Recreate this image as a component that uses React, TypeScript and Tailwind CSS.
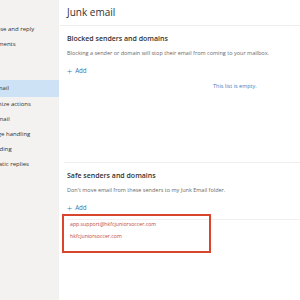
import React from 'react';

const font = { fontFamily: '"Open Sans", "Noto Sans", sans-serif' };

function NavItem({ label, active }: { label: string; active?: boolean }) {
  return (
    <div
      className={`flex items-center overflow-hidden whitespace-nowrap text-[6px] text-[#323130] ${
        active ? 'h-[17px] bg-[#cde3f5]' : 'h-[15px]'
      }`}
    >
      <span className="ml-[-20px]">{label}</span>
    </div>
  );
}

function AddButton() {
  return (
    <div className="flex h-[12px] items-center gap-[3px] text-[6.2px] text-[#3b74a8]">
      <span className="text-[9px] leading-none font-light">+</span>
      <span>Add</span>
    </div>
  );
}

export default function App() {
  return (
    <div className="flex h-[300px] w-[300px] overflow-hidden bg-white" style={font}>
      <aside className="w-[59px] shrink-0 bg-[#f3f2f1] pt-[22px]">
        <NavItem label="Compose and reply" />
        <NavItem label="Attachments" />
        <div className="h-[28px]" />
        <NavItem label="Junk email" active />
        <NavItem label="Customize actions" />
        <NavItem label="Sync email" />
        <NavItem label="Message handling" />
        <NavItem label="Forwarding" />
        <NavItem label="Automatic replies" />
      </aside>

      <main className="flex-1 pl-[1px]">
        <div className="flex h-[26px] items-center border-b border-[#efeeed] pl-[7px] text-[10px] text-[#323130]">
          Junk email
        </div>

        <section className="pl-[7px]">
          <h2 className="mt-[6px] flex h-[14px] items-center text-[7px] font-semibold text-[#323130]">
            Blocked senders and domains
          </h2>
          <p className="mt-[2px] flex h-[10px] items-center whitespace-nowrap text-[5.5px] text-[#6b6967]">
            Blocking a sender or domain will stop their email from coming to your mailbox.
          </p>
          <div className="mt-[7px]">
            <AddButton />
          </div>
          <p className="mt-[4px] ml-[146px] flex h-[10px] items-center text-[5.5px] text-[#3d82c4]">
            This list is empty.
          </p>
        </section>

        <div className="mt-[71px] ml-[4px] border-t border-[#efeeed]" />

        <section className="pl-[7px]">
          <h2 className="mt-[6px] flex h-[14px] items-center text-[7px] font-semibold text-[#323130]">
            Safe senders and domains
          </h2>
          <p className="mt-[2px] flex h-[10px] items-center whitespace-nowrap text-[5.5px] text-[#6b6967]">
            Don't move email from these senders to my Junk Email folder.
          </p>
          <div className="mt-[7px]">
            <AddButton />
          </div>
          <div className="relative mt-[5px] border-t border-[#f1f0ef]">
            <div className="flex h-[10px] items-center pl-[3px] text-[5.2px] text-[#c1463a]">
              app.support@hkfcjuniorsoccer.com
            </div>
            <div className="mt-[2px] flex h-[10px] items-center pl-[3px] text-[5.2px] text-[#c1463a]">
              hkfcjuniorsoccer.com
            </div>
            <div className="absolute top-[-6px] left-[-5px] h-[39px] w-[149px] border-2 border-[#d9442c]" />
          </div>
        </section>
      </main>
    </div>
  );
}
